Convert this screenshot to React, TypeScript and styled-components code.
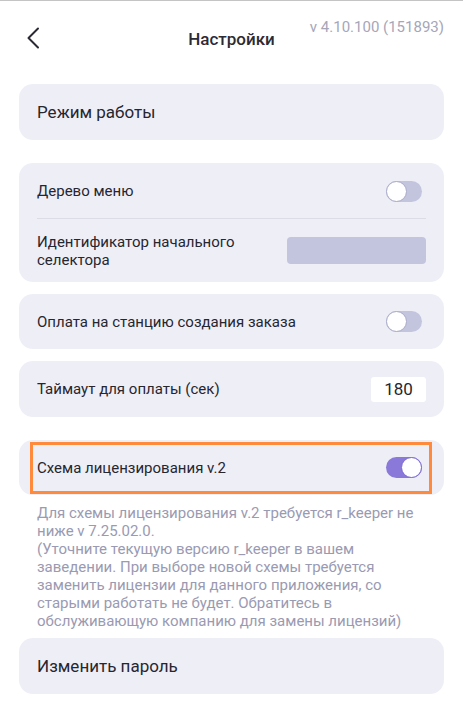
import { ReactNode } from 'react';
import styled, { createGlobalStyle, css } from 'styled-components';

const GlobalStyle = createGlobalStyle`
  html, body {
    margin: 0;
    padding: 0;
    background: #ffffff;
  }
  body {
    font-family: Roboto, 'Noto Sans', sans-serif;
    color: #26262f;
    -webkit-font-smoothing: antialiased;
  }
`;

const Screen = styled.div`
  width: 463px;
  min-height: 703px;
  box-sizing: border-box;
  border-top: 1px solid #c4c4c4;
  padding: 0 19px;
`;

const Header = styled.header`
  display: grid;
  grid-template-columns: 1fr auto 1fr;
  align-items: center;
  height: 76px;
  margin-bottom: 7px;
`;

const BackButton = styled.button`
  justify-self: start;
  display: flex;
  align-items: center;
  justify-content: center;
  width: 24px;
  height: 24px;
  margin-left: 2px;
  margin-top: -3px;
  padding: 0;
  border: 0;
  background: none;
  color: #2a2a35;
`;

const Title = styled.h1`
  margin: 0;
  font-size: 17px;
  font-weight: 500;
  color: #2b2b36;
`;

const Version = styled.span`
  justify-self: end;
  align-self: start;
  margin-top: 17px;
  font-size: 15px;
  color: #a6a6b8;
  white-space: nowrap;
`;

const Card = styled.section<{ $gap?: number; $highlight?: boolean }>`
  position: relative;
  margin-top: ${({ $gap = 12 }) => $gap}px;
  background: #eeeef7;
  border-radius: 14px;
  ${({ $highlight }) =>
    $highlight &&
    css`
      &::after {
        content: '';
        position: absolute;
        top: 2px;
        bottom: 1px;
        left: 11px;
        right: 12px;
        border: 3px solid #ff8a3c;
        pointer-events: none;
      }
    `}
`;

const Row = styled.div<{ $height?: number; $divider?: boolean }>`
  position: relative;
  display: flex;
  align-items: center;
  justify-content: space-between;
  gap: 16px;
  min-height: ${({ $height = 56 }) => $height}px;
  padding: 0 18px;
  ${({ $divider }) =>
    $divider &&
    css`
      &::after {
        content: '';
        position: absolute;
        left: 18px;
        right: 18px;
        bottom: 0;
        height: 1px;
        background: #dcdce6;
      }
    `}
`;

const Label = styled.span<{ $large?: boolean }>`
  font-size: ${({ $large }) => ($large ? 17 : 15)}px;
  line-height: 18px;
  color: #26262f;
`;

const SwitchTrack = styled.span<{ $on?: boolean }>`
  position: relative;
  flex: none;
  display: inline-block;
  width: 36px;
  height: 21px;
  margin-right: 4px;
  border-radius: 11px;
  background: ${({ $on }) => ($on ? '#8a79d8' : '#c3c5df')};
`;

const SwitchKnob = styled.span<{ $on?: boolean }>`
  position: absolute;
  top: 0;
  ${({ $on }) => ($on ? 'right: 0;' : 'left: 0;')}
  width: 19px;
  height: 19px;
  border-radius: 50%;
  background: #ffffff;
  border: 1px solid ${({ $on }) => ($on ? '#7d6bd2' : '#a9abc9')};
`;

const SelectorField = styled.div`
  flex: none;
  width: 139px;
  height: 27px;
  border-radius: 4px;
  background: #c3c5df;
`;

const NumberField = styled.div`
  flex: none;
  display: flex;
  align-items: center;
  justify-content: center;
  width: 55px;
  height: 25px;
  border-radius: 3px;
  background: #ffffff;
  font-size: 17px;
  color: #26262f;
`;

const Hint = styled.p`
  margin: 9px 0 8px;
  padding: 0 18px;
  font-size: 15px;
  line-height: 18px;
  color: #9a9ab2;
`;

const Toggle = ({ on }: { on?: boolean }) => (
  <SwitchTrack $on={on}>
    <SwitchKnob $on={on} />
  </SwitchTrack>
);

const Chevron = () => (
  <svg width="14" height="22" viewBox="0 0 14 22" fill="none">
    <path d="M12 1.5 2.5 11l9.5 9.5" stroke="currentColor" strokeWidth="2" strokeLinecap="round" strokeLinejoin="round" />
  </svg>
);

const SimpleCard = ({ children, gap }: { children: ReactNode; gap?: number }) => (
  <Card $gap={gap}>
    <Row>
      <Label $large>{children}</Label>
    </Row>
  </Card>
);

export default function App() {
  return (
    <>
      <GlobalStyle />
      <Screen>
        <Header>
          <BackButton aria-label="Назад">
            <Chevron />
          </BackButton>
          <Title>Настройки</Title>
          <Version>v 4.10.100 (151893)</Version>
        </Header>

        <SimpleCard gap={0}>Режим работы</SimpleCard>

        <Card $gap={23}>
          <Row $divider>
            <Label>Дерево меню</Label>
            <Toggle />
          </Row>
          <Row $height={63}>
            <Label>
              Идентификатор начального
              <br />
              селектора
            </Label>
            <SelectorField />
          </Row>
        </Card>

        <Card>
          <Row $height={55}>
            <Label>Оплата на станцию создания заказа</Label>
            <Toggle />
          </Row>
        </Card>

        <Card>
          <Row>
            <Label>Таймаут для оплаты (сек)</Label>
            <NumberField>180</NumberField>
          </Row>
        </Card>

        <Card $gap={23} $highlight>
          <Row $height={55}>
            <Label>Схема лицензирования v.2</Label>
            <Toggle on />
          </Row>
        </Card>

        <Hint>
          Для схемы лицензирования v.2 требуется r_keeper не ниже v 7.25.02.0.
          <br />
          (Уточните текущую версию r_keeper в вашем заведении. При выборе новой схемы требуется
          заменить лицензии для данного приложения, со старыми работать не будет. Обратитесь в
          обслуживающую компанию для замены лицензий)
        </Hint>

        <SimpleCard gap={0}>Изменить пароль</SimpleCard>
      </Screen>
    </>
  );
}
